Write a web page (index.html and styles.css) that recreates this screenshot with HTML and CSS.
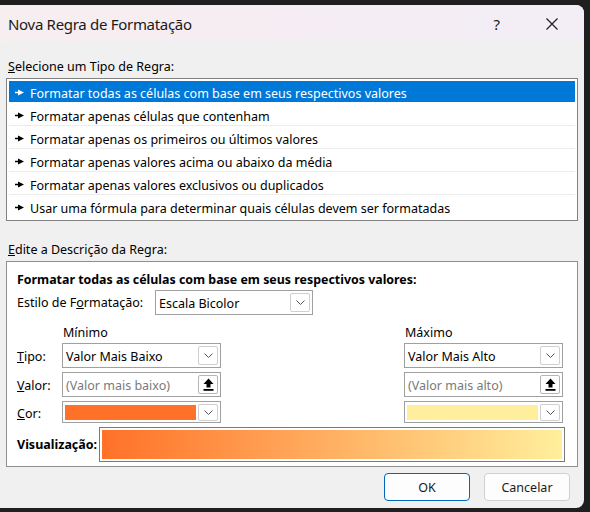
FILE: index.html
```html
<!DOCTYPE html>
<html lang="pt-BR">
<head>
<meta charset="utf-8">
<title>Nova Regra de Formatação</title>
<link rel="stylesheet" href="styles.css">
</head>
<body>
<div class="dialog">
  <div class="titlebar">
    <span class="title">Nova Regra de Formatação</span>
    <span class="help">?</span>
    <svg class="close" width="12" height="12" viewBox="0 0 12 12"><path d="M0.5 0.5 L11.5 11.5 M11.5 0.5 L0.5 11.5" stroke="#1a1a1a" stroke-width="1.1" fill="none"/></svg>
  </div>
  <div class="body">
    <div class="label"><u>S</u>elecione um Tipo de Regra:</div>
    <div class="list">
      <div class="item selected"><svg class="bullet" width="9" height="7" viewBox="0 0 9 7"><path d="M0 3.5 H4" stroke="currentColor" stroke-width="1.6"/><path d="M3 0.5 L9 3.5 L3 6.5 Z" fill="currentColor"/></svg>Formatar todas as células com base em seus respectivos valores</div>
      <div class="item"><svg class="bullet" width="9" height="7" viewBox="0 0 9 7"><path d="M0 3.5 H4" stroke="currentColor" stroke-width="1.6"/><path d="M3 0.5 L9 3.5 L3 6.5 Z" fill="currentColor"/></svg>Formatar apenas células que contenham</div>
      <div class="item"><svg class="bullet" width="9" height="7" viewBox="0 0 9 7"><path d="M0 3.5 H4" stroke="currentColor" stroke-width="1.6"/><path d="M3 0.5 L9 3.5 L3 6.5 Z" fill="currentColor"/></svg>Formatar apenas os primeiros ou últimos valores</div>
      <div class="item"><svg class="bullet" width="9" height="7" viewBox="0 0 9 7"><path d="M0 3.5 H4" stroke="currentColor" stroke-width="1.6"/><path d="M3 0.5 L9 3.5 L3 6.5 Z" fill="currentColor"/></svg>Formatar apenas valores acima ou abaixo da média</div>
      <div class="item"><svg class="bullet" width="9" height="7" viewBox="0 0 9 7"><path d="M0 3.5 H4" stroke="currentColor" stroke-width="1.6"/><path d="M3 0.5 L9 3.5 L3 6.5 Z" fill="currentColor"/></svg>Formatar apenas valores exclusivos ou duplicados</div>
      <div class="item last"><svg class="bullet" width="9" height="7" viewBox="0 0 9 7"><path d="M0 3.5 H4" stroke="currentColor" stroke-width="1.6"/><path d="M3 0.5 L9 3.5 L3 6.5 Z" fill="currentColor"/></svg>Usar uma fórmula para determinar quais células devem ser formatadas</div>
    </div>

    <div class="label label-desc"><u>E</u>dite a Descrição da Regra:</div>
    <div class="desc">
      <div class="heading">Formatar todas as células com base em seus respectivos valores:</div>
      <div class="style-row">
        <span class="style-label">Estilo de F<u>o</u>rmatação:</span>
        <div class="select style-select"><span class="val">Escala Bicolor</span><span class="chev"><svg width="9" height="5" viewBox="0 0 9 5"><path d="M0.5 0.5 L4.5 4.5 L8.5 0.5" stroke="#555" stroke-width="1" fill="none"/></svg></span></div>
      </div>
      <div class="grid">
        <span></span><span class="colhead">Mínimo</span><span></span><span class="colhead">Máximo</span>

        <span class="rowlabel"><u>T</u>ipo:</span>
        <div class="select"><span class="val">Valor Mais Baixo</span><span class="chev"><svg width="9" height="5" viewBox="0 0 9 5"><path d="M0.5 0.5 L4.5 4.5 L8.5 0.5" stroke="#555" stroke-width="1" fill="none"/></svg></span></div>
        <span></span>
        <div class="select"><span class="val">Valor Mais Alto</span><span class="chev"><svg width="9" height="5" viewBox="0 0 9 5"><path d="M0.5 0.5 L4.5 4.5 L8.5 0.5" stroke="#555" stroke-width="1" fill="none"/></svg></span></div>

        <span class="rowlabel"><u>V</u>alor:</span>
        <div class="select input"><span class="val placeholder">(Valor mais baixo)</span><span class="pick"><svg width="11" height="13" viewBox="0 0 11 13"><path d="M5.5 0.5 L10.5 6 H7.5 V9.5 H3.5 V6 H0.5 Z" fill="#000"/><rect x="0.5" y="11" width="10" height="1.8" fill="#000"/></svg></span></div>
        <span></span>
        <div class="select input"><span class="val placeholder">(Valor mais alto)</span><span class="pick"><svg width="11" height="13" viewBox="0 0 11 13"><path d="M5.5 0.5 L10.5 6 H7.5 V9.5 H3.5 V6 H0.5 Z" fill="#000"/><rect x="0.5" y="11" width="10" height="1.8" fill="#000"/></svg></span></div>

        <span class="rowlabel"><u>C</u>or:</span>
        <div class="select color"><span class="swatch swatch-min"></span><span class="chev"><svg width="9" height="5" viewBox="0 0 9 5"><path d="M0.5 0.5 L4.5 4.5 L8.5 0.5" stroke="#555" stroke-width="1" fill="none"/></svg></span></div>
        <span></span>
        <div class="select color"><span class="swatch swatch-max"></span><span class="chev"><svg width="9" height="5" viewBox="0 0 9 5"><path d="M0.5 0.5 L4.5 4.5 L8.5 0.5" stroke="#555" stroke-width="1" fill="none"/></svg></span></div>
      </div>
      <div class="preview-row">
        <span class="preview-label">Visualização:</span>
        <div class="preview"><div class="gradient"></div></div>
      </div>
    </div>

    <div class="buttons">
      <button class="btn primary">OK</button>
      <button class="btn">Cancelar</button>
    </div>
  </div>
</div>
</body>
</html>
```
FILE: styles.css
```css
* { box-sizing: border-box; }
html, body { margin: 0; padding: 0; }
body {
  width: 590px;
  height: 512px;
  background: #1f1f1f;
  font-family: "Segoe UI", "Noto Sans", "Open Sans", sans-serif;
  font-size: 12.5px;
  color: #000;
  padding-top: 5px;
  overflow: hidden;
}
.dialog {
  width: 584px;
  height: 503px;
  background: #f0f0f0;
  border-radius: 0 8px 8px 0;
  overflow: hidden;
  display: flex;
  flex-direction: column;
}
.titlebar {
  height: 37px;
  flex: none;
  display: flex;
  align-items: center;
  background: linear-gradient(90deg, #f7eef0 0%, #f5edf3 50%, #f3edf6 100%);
  padding-left: 8px;
}
.title {
  font-size: 15px;
  color: #1a1a1a;
  flex: 1;
  letter-spacing: -0.3px;
}
.help {
  font-size: 15px;
  color: #1a1a1a;
  margin-right: 46px;
}
.close { margin-right: 26px; }
.body {
  flex: 1;
  padding: 17px 6px 0 6px;
  display: flex;
  flex-direction: column;
}
.label {
  padding-left: 2px;
  line-height: 16px;
  margin-bottom: 3px;
}
.label-desc { margin-top: 21px; }
.list {
  width: 572px;
  height: 143px;
  border: 1px solid #828282;
  background: #fff;
  padding: 2px 2px;
}
.item {
  height: 23px;
  display: flex;
  align-items: center;
  border-bottom: 1px solid #ececec;
  padding-left: 6px;
  padding-top: 4px;
  white-space: nowrap;
}
.item .bullet { margin-top: -2px; }
.item.last { border-bottom: none; }
.item.selected {
  background: #0078d7;
  color: #fff;
  height: 21px;
  border-bottom: none;
  margin-bottom: 1px;
}
.bullet { margin-right: 6px; color: #000; }
.selected .bullet { color: #fff; }
.desc {
  width: 572px;
  height: 206px;
  border: 1px solid #8e8e8e;
  background: #fff;
  padding: 9px 10px 0 10px;
}
.heading {
  font-weight: bold;
  line-height: 16px;
  font-size: 12.4px;
  padding-top: 1px;
}
.style-row {
  display: flex;
  align-items: center;
  margin-top: 2px;
}
.style-label { width: 138px; }
.select {
  height: 25px;
  border: 1px solid #a0a0a0;
  background: #fff;
  display: flex;
  align-items: center;
  padding: 2px;
}
.style-select { width: 158px; }
.val {
  flex: 1;
  padding-left: 1px;
  padding-top: 1px;
  white-space: nowrap;
  overflow: hidden;
}
.placeholder { color: #7a7a7a; }
.chev, .pick {
  width: 20px;
  height: 19px;
  border: 1px solid #cfcfcf;
  border-radius: 2px;
  display: flex;
  align-items: center;
  justify-content: center;
  background: #fff;
}
.pick { border-color: #b5b5b5; }
.grid {
  display: grid;
  grid-template-columns: 45px 159px 183px 159px;
  grid-template-rows: 15px 25px 25px 22px;
  row-gap: 4px;
  margin-top: 9px;
  align-items: center;
}
.colhead { padding-left: 1px; line-height: 15px; padding-top: 1px; }
.rowlabel { padding-top: 2px; }
.grid .select { height: 100%; }
.color { padding: 2px; }
.color .chev { height: 17px; }
.swatch { flex: 1; height: 15px; margin-right: 2px; }
.swatch-min { background: #ff7128; }
.swatch-max { background: #ffef9c; }
.preview-row {
  display: flex;
  align-items: center;
  margin-top: 4px;
}
.preview-label { font-weight: bold; width: 82px; }
.preview {
  width: 466px;
  height: 35px;
  border: 1px solid #7a7a7a;
  padding: 2px;
}
.gradient {
  height: 100%;
  background: linear-gradient(90deg, #ff7128 0%, #ffef9c 100%);
}
.buttons {
  display: flex;
  justify-content: flex-end;
  gap: 14px;
  padding-right: 8px;
  margin-top: 6px;
}
.btn {
  font-family: inherit;
  font-size: 12.5px;
  width: 86px;
  height: 28px;
  border: 1px solid #d0d0d0;
  border-radius: 4px;
  background: #fdfdfd;
  color: #1a1a1a;
}
.btn.primary { border-color: #0067c0; }
```
